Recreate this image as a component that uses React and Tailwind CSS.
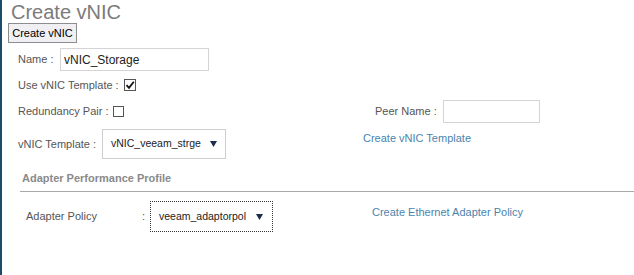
import React from "react";

function Caret() {
  return (
    <svg width="7" height="6" viewBox="0 0 7 6" className="shrink-0">
      <path d="M0 0 H7 L3.5 6 Z" fill="#1b2d4d" />
    </svg>
  );
}

function Checkbox({ checked, size = "w-[12px] h-[12px]" }) {
  return (
    <span className={`${size} border border-[#555] bg-white flex items-center justify-center`}>
      {checked && (
        <svg width="10" height="10" viewBox="0 0 10 10">
          <path d="M1.5 5.2 L4 7.8 L8.8 1.8" fill="none" stroke="#111" strokeWidth="1.8" />
        </svg>
      )}
    </span>
  );
}

export default function App() {
  return (
    <div className="flex h-[275px] w-[634px] overflow-hidden bg-white font-['Liberation_Sans',Arial,sans-serif] text-[11px] text-[#555]">
      <div className="w-[2px] shrink-0 bg-[#1d4a68]" />
      <div className="flex flex-1 flex-col">
        <h1 className="ml-[9px] h-[23px] text-[20px] leading-[24px] text-[#7b7b7b]">Create vNIC</h1>
        <button className="ml-[6px] h-[20px] w-[69px] border border-[#8d8d8d] bg-[#efeff4] text-[11px] leading-none text-black">
          Create vNIC
        </button>

        {/* Name */}
        <div className="ml-[16px] mt-[5px] flex h-[23px] items-center">
          <span className="w-[42px]">Name :</span>
          <div className="flex h-[23px] w-[149px] items-center border border-[#d4d4d4] px-[3px] text-[12px] text-[#222]">
            vNIC_Storage
          </div>
        </div>

        {/* Use vNIC Template */}
        <div className="ml-[16px] flex h-[28px] items-center">
          <span className="w-[106px]">Use vNIC Template :</span>
          <Checkbox checked />
        </div>

        {/* Redundancy Pair / Peer Name */}
        <div className="ml-[16px] flex h-[24px] items-center">
          <div className="flex w-[357px] items-center">
            <span className="w-[95px]">Redundancy Pair :</span>
            <Checkbox size="w-[11px] h-[11px]" />
          </div>
          <span className="w-[68px]">Peer Name :</span>
          <div className="h-[23px] w-[97px] border border-[#d4d4d4]" />
        </div>

        {/* vNIC Template */}
        <div className="ml-[16px] mt-[6px] flex items-start">
          <div className="flex h-[30px] items-center">
            <span className="w-[84px]">vNIC Template :</span>
            <div className="flex h-[30px] w-[124px] items-center justify-between border border-[#cfcfcf] pl-[8px] pr-[8px] text-[10.5px] text-[#222]">
              <span>vNIC_veeam_strge</span>
              <Caret />
            </div>
          </div>
          <span className="ml-[137px] mt-[1px] text-[#4a84ad]">Create vNIC Template</span>
        </div>

        {/* Adapter Performance Profile */}
        <div className="ml-[18px] mt-[12px]">
          <div className="pl-[2px] text-[11px] font-bold leading-[14px] text-[#8a8a8a]">Adapter Performance Profile</div>
          <div className="mt-[6px] border-t border-[#a8a8a8]" />
        </div>

        <div className="ml-[24px] mt-[9px] flex items-start">
          <div className="flex h-[31px] items-center">
            <span className="w-[116px]">Adapter Policy</span>
            <span className="w-[8px]">:</span>
            <div className="flex h-[31px] w-[123px] items-center justify-between border border-dotted border-[#333] pl-[8px] pr-[9px] text-[10.5px] text-[#222]">
              <span>veeam_adaptorpol</span>
              <Caret />
            </div>
          </div>
          <span className="ml-[99px] mt-[3px] text-[#4a84ad]">Create Ethernet Adapter Policy</span>
        </div>
      </div>
    </div>
  );
}
